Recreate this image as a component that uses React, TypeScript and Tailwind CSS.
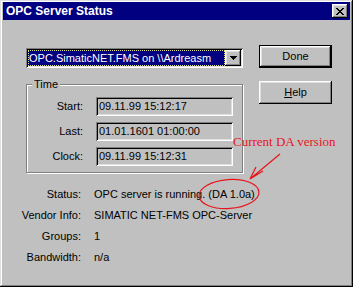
const raised =
  "shadow-[inset_-1px_-1px_#000,inset_1px_1px_#fff,inset_-2px_-2px_#808080,inset_2px_2px_#dfdfdf]";
const sunken =
  "shadow-[inset_1px_1px_#808080,inset_-1px_-1px_#fff,inset_2px_2px_#000,inset_-2px_-2px_#dfdfdf]";

const times = [
  { label: "Start:", value: "09.11.99 15:12:17" },
  { label: "Last:", value: "01.01.1601 01:00:00" },
  { label: "Clock:", value: "09.11.99 15:12:31" },
];

const info = [
  { label: "Status:", value: "OPC server is running. (DA 1.0a)" },
  { label: "Vendor Info:", value: "SIMATIC NET-FMS OPC-Server" },
  { label: "Groups:", value: "1" },
  { label: "Bandwidth:", value: "n/a" },
];

export default function App() {
  return (
    <div className="relative w-[353px] h-[287px] bg-[#c0c0c0] px-[3px] pt-[2px] text-[11px] leading-[13px] text-black font-['Liberation_Sans',Arial,sans-serif] shadow-[inset_-1px_-1px_#000,inset_1px_1px_#dfdfdf,inset_-2px_-2px_#808080,inset_2px_2px_#fff]">
      {/* title bar */}
      <div className="h-[18px] bg-[#000080] flex items-center justify-between pl-[3px] pr-[2px]">
        <span className="text-white font-bold text-[12px]">OPC Server Status</span>
        <div className={`w-[16px] h-[14px] bg-[#c0c0c0] flex items-center justify-center ${raised}`}>
          <svg width="8" height="7" viewBox="0 0 8 7" shapeRendering="crispEdges">
            <path d="M0 0h2v1h1v1h2V1h1V0h2v1H7v1H6v1H5v1h1v1h1v1h1v1H6V6H5V5H3v1H2v1H0V6h1V5h1V4h1V3H2V2H1V1H0z" fill="#000" />
          </svg>
        </div>
      </div>

      <div className="flex pl-[23px] mt-[25px]">
        {/* left column */}
        <div className="w-[217px] pt-[3px]">
          <div className={`h-[20px] flex bg-white p-[2px] ${sunken}`}>
            <div className="flex-1 bg-[#000080] text-white flex items-center pl-[1px] outline-1 outline-dotted outline-[#e0e080] -outline-offset-1">
              OPC.SimaticNET.FMS on \\Ardreasm
            </div>
            <div className={`w-[16px] bg-[#c0c0c0] flex items-center justify-center ${raised}`}>
              <svg width="7" height="4" viewBox="0 0 7 4" shapeRendering="crispEdges">
                <path d="M0 0h7v1H6v1H5v1H4v1H3V3H2V2H1V1H0z" fill="#000" />
              </svg>
            </div>
          </div>

          <div className="relative mt-[16px] h-[89px] border border-[#808080] shadow-[1px_1px_#fff,inset_1px_1px_#fff] pt-[12px]">
            <span className="absolute left-[5px] -top-[7px] px-[2px] bg-[#c0c0c0]">Time</span>
            <div className="grid grid-cols-[56px_137px] gap-x-[13px] gap-y-[6px] items-center">
              {times.map((t) => (
                <div key={t.label} className="contents">
                  <span className="text-right">{t.label}</span>
                  <div className={`h-[19px] flex items-center pl-[3px] bg-[#c0c0c0] ${sunken}`}>{t.value}</div>
                </div>
              ))}
            </div>
          </div>
        </div>

        {/* buttons */}
        <div className="ml-[16px] w-[73px] flex flex-col gap-[13px]">
          <button className={`h-[23px] border border-black bg-[#c0c0c0] ${raised}`}>Done</button>
          <button className={`h-[23px] bg-[#c0c0c0] ${raised}`}>
            <span className="underline">H</span>elp
          </button>
        </div>
      </div>

      {/* status info */}
      <div className="grid grid-cols-[61px_auto] gap-x-[13px] ml-[17px] mt-[11px]">
        {info.map((r) => (
          <div key={r.label} className="contents">
            <span className="h-[21px] flex items-center justify-end whitespace-nowrap">{r.label}</span>
            <span className="h-[21px] flex items-center whitespace-nowrap">{r.value}</span>
          </div>
        ))}
      </div>

      {/* annotation */}
      <span className="absolute left-[233px] top-[134px] text-[13px] leading-[15px] text-[#e8141c] font-['Liberation_Serif','Times_New_Roman',serif]">
        Current DA version
      </span>
      <svg className="absolute left-0 top-0 pointer-events-none" width="353" height="287" viewBox="0 0 353 287">
        <g stroke="#e8141c" strokeWidth="1.2" fill="none">
          <ellipse cx="229" cy="194" rx="30" ry="14.5" transform="rotate(-4 229 194)" />
          <path d="M280 154L250 179M250 179L256 167M250 179L263 171" />
        </g>
      </svg>
    </div>
  );
}
